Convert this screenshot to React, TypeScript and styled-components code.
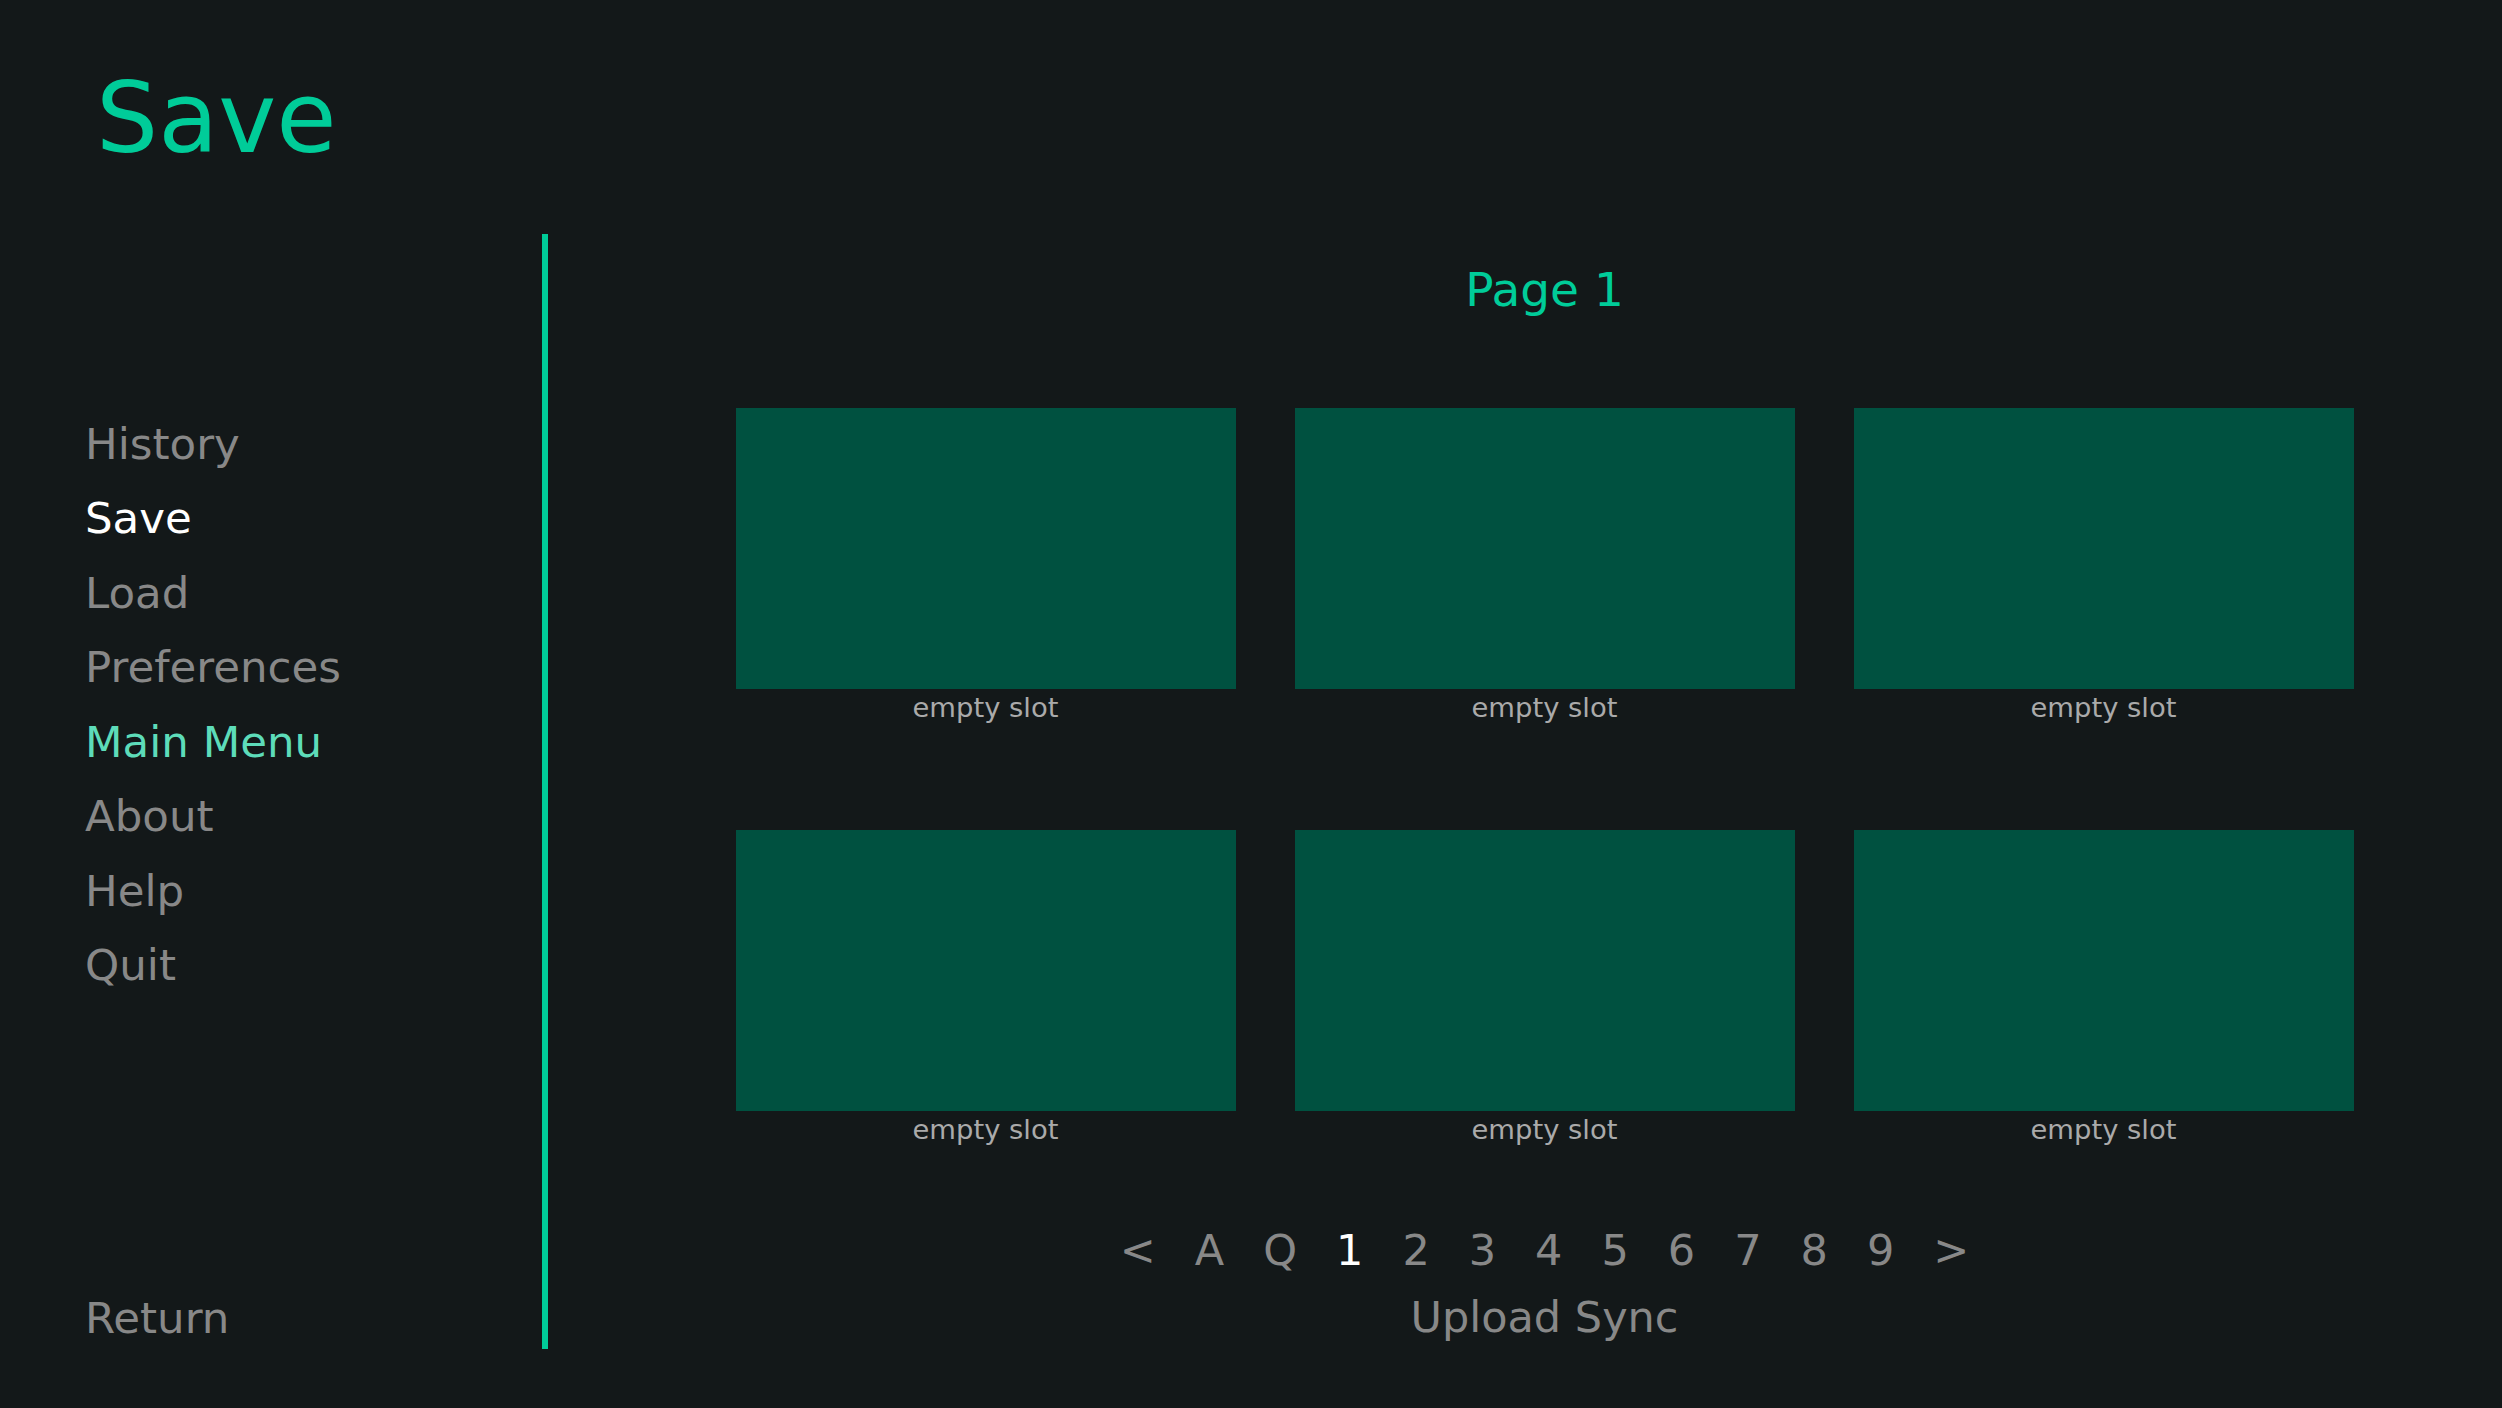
import React from 'react';
import styled, { createGlobalStyle } from 'styled-components';

const accent = '#00cc99';
const idle = '#888888';

const GlobalStyle = createGlobalStyle`
	html, body {
		margin: 0;
		padding: 0;
		background: #131819;
	}
	body {
		font-family: 'DejaVu Sans', 'Liberation Sans', sans-serif;
	}
`;

const menuItems = [
	{ label: 'History', state: 'idle' },
	{ label: 'Save', state: 'selected' },
	{ label: 'Load', state: 'idle' },
	{ label: 'Preferences', state: 'idle' },
	{ label: 'Main Menu', state: 'hover' },
	{ label: 'About', state: 'idle' },
	{ label: 'Help', state: 'idle' },
	{ label: 'Quit', state: 'idle' },
];

const pages = ['<', 'A', 'Q', '1', '2', '3', '4', '5', '6', '7', '8', '9', '>'];

const App = () => {
	return (
		<>
			<GlobalStyle />
			<Screen>
				<TitleBar>
					<Title>Save</Title>
				</TitleBar>
				<Body>
					<Sidebar>
						<Menu>
							{menuItems.map((item) => (
								<MenuButton key={item.label} $state={item.state}>
									{item.label}
								</MenuButton>
							))}
						</Menu>
						<ReturnButton>Return</ReturnButton>
					</Sidebar>
					<Divider />
					<Content>
						<PageLabel>Page 1</PageLabel>
						<SlotGrid>
							{Array.from({ length: 6 }).map((_, i) => (
								<Slot key={i}>
									<Thumb />
									<Caption>empty slot</Caption>
								</Slot>
							))}
						</SlotGrid>
						<PageNav>
							{pages.map((p) => (
								<PageButton key={p} $selected={p === '1'}>
									{p}
								</PageButton>
							))}
						</PageNav>
						<SyncButton>Upload Sync</SyncButton>
					</Content>
				</Body>
			</Screen>
		</>
	);
};

const Screen = styled.div`
	width: 100vw;
	height: 100vh;
	display: flex;
	flex-direction: column;
	background: #131819;
	overflow: hidden;
`;

const TitleBar = styled.header`
	height: 234px;
	flex-shrink: 0;
	padding: 69px 0 0 96px;
	box-sizing: border-box;
`;

const Title = styled.h1`
	margin: 0;
	font-size: 98px;
	font-weight: 400;
	line-height: 1;
	color: ${accent};
`;

const Body = styled.div`
	flex: 1;
	display: flex;
	align-items: flex-start;
	min-height: 0;
`;

const Sidebar = styled.nav`
	width: 542px;
	height: 100%;
	flex-shrink: 0;
	display: flex;
	flex-direction: column;
	padding: 172.5px 0 53px 85px;
	box-sizing: border-box;
`;

const Menu = styled.div`
	display: flex;
	flex-direction: column;
`;

const MenuButton = styled.div<{ $state: string }>`
	font-size: 43.5px;
	line-height: 74.5px;
	white-space: nowrap;
	color: ${(p) => (p.$state === 'selected' ? '#ffffff' : p.$state === 'hover' ? '#5ddcb9' : idle)};
`;

const ReturnButton = styled(MenuButton).attrs({ $state: 'idle' })`
	margin-top: auto;
`;

const Divider = styled.div`
	width: 6px;
	height: 1115px;
	flex-shrink: 0;
	background: ${accent};
`;

const Content = styled.main`
	flex: 1;
	display: flex;
	flex-direction: column;
	align-items: center;
	padding: 32px 39px 0 78px;
`;

const PageLabel = styled.div`
	font-size: 47px;
	line-height: 1;
	color: ${accent};
	margin-bottom: 75.8px;
`;

const SlotGrid = styled.div`
	display: grid;
	grid-template-columns: repeat(3, 539.5px);
	gap: 19.5px;
`;

const Slot = styled.div`
	height: 402.7px;
	padding: 19.5px;
	box-sizing: border-box;
	display: flex;
	flex-direction: column;
	align-items: center;
`;

const Thumb = styled.div`
	width: 500px;
	height: 281px;
	background: #005140;
`;

const Caption = styled.div`
	margin-top: 5px;
	font-size: 27.4px;
	line-height: 1;
	color: #aaaaaa;
`;

const PageNav = styled.div`
	display: flex;
	margin-top: 7.5px;
`;

const PageButton = styled.div<{ $selected?: boolean }>`
	padding: 7.8px 19.5px;
	font-size: 43px;
	line-height: 1;
	color: ${(p) => (p.$selected ? '#ffffff' : idle)};
`;

const SyncButton = styled.div`
	margin-top: 8.4px;
	padding: 7.8px 19.5px;
	font-size: 43px;
	line-height: 1;
	color: ${idle};
`;

export default App;
